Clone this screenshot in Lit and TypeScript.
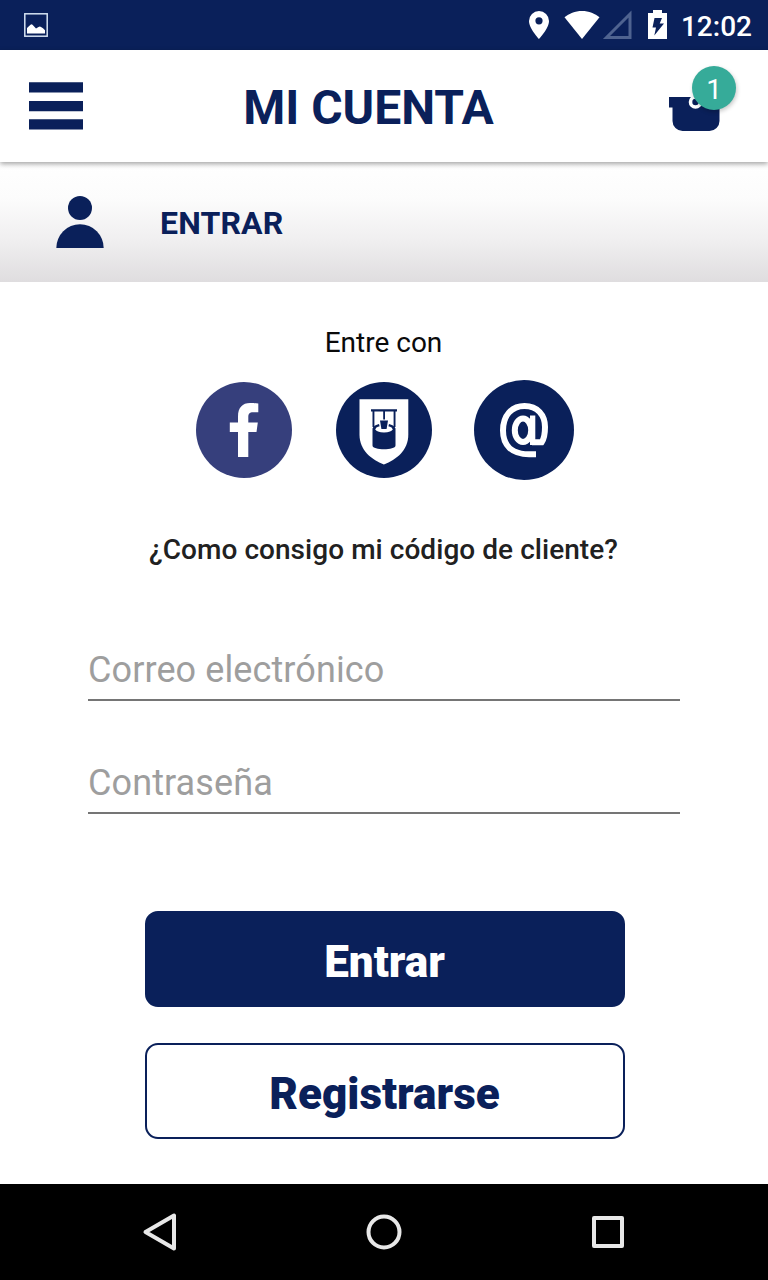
import { LitElement, html, css } from "lit";
import { customElement, property } from "lit/decorators.js";

@customElement("status-bar")
class StatusBar extends LitElement {
  static styles = css`
    :host {
      display: flex;
      align-items: center;
      height: 50px;
      padding: 0 16px 0 24px;
      box-sizing: border-box;
      background: #0a205a;
      color: #fff;
      font: 500 28px/50px Roboto, sans-serif;
    }
    svg { display: block; }
    .tray { margin-left: auto; }
    .clock { margin: 3px 0 0 13px; }
  `;
  render() {
    return html`
      <svg width="24" height="24" viewBox="0 0 24 24">
        <rect x=".8" y=".8" width="22.4" height="22.4" fill="none" stroke="#d5e2f2" stroke-width="1.5" />
        <path fill="#fff" d="M3 20.500V15l3.500-3.200q1-1 2 0L12 15.500l2.500-1.500q1.500-.8 2.500 0l2 1.200 2 2v3.300z" />
      </svg>
      <svg class="tray" width="140" height="30" viewBox="528 10 140 30">
        <path fill="#fff" fill-rule="evenodd" d="M539 11a10 10 0 0 0-10 10c0 7.500 10 18 10 18s10-10.500 10-18a10 10 0 0 0-10-10zm0 6.200a3.600 3.600 0 1 1 0 7.200 3.600 3.600 0 0 1 0-7.200z" />
        <path fill="#fff" d="M582 39 564.500 17.300C569 13.500 575 11 582 11s13 2.500 17.500 6.300z" />
        <path fill="none" stroke="#4f6390" stroke-width="3" d="M606.500 37.500h23.500V14z" />
        <path fill="#fff" d="M648 13h5v-3h9v3h5v26h-19z" />
        <path fill="#0a205a" d="M654.500 18h7.500l-2.300 5.500h4.300L654.300 35.500l1.700-8h-3.500z" />
      </svg>
      <span class="clock">12:02</span>
    `;
  }
}

@customElement("app-header")
class AppHeader extends LitElement {
  @property({ type: Number }) count = 0;
  static styles = css`
    :host {
      display: flex;
      align-items: center;
      height: 112px;
      padding: 0 32px 0 29px;
      box-sizing: border-box;
      background: #fff;
      position: relative;
      z-index: 1;
      box-shadow: 0 2px 5px rgba(0, 0, 0, 0.36);
      font-family: Roboto, sans-serif;
      color: #0a205a;
    }
    svg { display: block; }
    h1 {
      flex: 1;
      margin: 3px 0 0;
      padding-right: 15px;
      text-align: center;
      font-size: 48px;
      line-height: 56px;
      font-weight: 700;
    }
    .basket { position: relative; width: 67px; height: 80px; }
    .badge {
      position: absolute;
      right: 0;
      top: 0;
      width: 44px;
      height: 44px;
      border-radius: 50%;
      background: #36ab99;
      color: #fff;
      text-align: center;
      font-size: 28px;
      line-height: 48px;
      box-shadow: 1px 2px 4px rgba(0, 0, 0, 0.22);
    }
  `;
  render() {
    return html`
      <svg width="54" height="48" viewBox="0 0 54 48" fill="#0a205a">
        <path d="M0 .3h54v10.200H0zM0 19h54v10.200H0zM0 37.200h54v10.300H0z" />
      </svg>
      <h1>MI CUENTA</h1>
      <div class="basket">
        <svg width="67" height="80" viewBox="669 66 67 80">
          <path fill="#0a205a" d="M669 97h54v10.500h-3.500V121a10 10 0 0 1-10 10h-27a10 10 0 0 1-10-10v-13.500H669z" />
          <circle cx="695.500" cy="102" r="5" fill="none" stroke="#fff" stroke-width="3.600" />
        </svg>
        <span class="badge">${this.count}</span>
      </div>
    `;
  }
}

@customElement("section-banner")
class SectionBanner extends LitElement {
  static styles = css`
    :host {
      display: flex;
      align-items: center;
      gap: 56px;
      height: 120px;
      padding: 0 56px;
      box-sizing: border-box;
      background: linear-gradient(#fff, #fcfcfc 30%, #f0eff0 65%, #dfdddf);
      font: 700 32px/40px Roboto, sans-serif;
      letter-spacing: 0.15px;
      color: #0a205a;
    }
    svg { display: block; }
    span { padding-top: 2px; }
  `;
  render() {
    return html`
      <svg width="48" height="52" viewBox="0 0 48 52" fill="#0a205a">
        <circle cx="24" cy="12" r="12" />
        <path d="M.3 52a23.700 23.700 0 0 1 47.400 0z" />
      </svg>
      <span>ENTRAR</span>
    `;
  }
}

@customElement("login-form")
class LoginForm extends LitElement {
  static styles = css`
    :host {
      display: flex;
      flex-direction: column;
      align-items: center;
      height: 902px;
      padding-top: 44px;
      box-sizing: border-box;
      background: #fff;
      font-family: Roboto, sans-serif;
    }
    svg { display: block; }
    p { margin: 0; padding-right: 1px; font-size: 28px; line-height: 34px; color: #0a0a0a; }
    .social { display: flex; align-items: center; height: 100px; margin-top: 20px; padding-left: 2px; }
    .fb { margin-right: 44px; }
    .shield { margin-right: 42px; }
    .help { margin-top: 53px; font-weight: 500; color: #212121; letter-spacing: 0.05px; }
    input {
      display: block;
      width: 592px;
      height: 60px;
      padding: 0;
      box-sizing: border-box;
      border: 0;
      border-bottom: 2px solid #757575;
      border-radius: 0;
      outline: 0;
      background: none;
      font: 400 36px/44px Roboto, sans-serif;
      letter-spacing: 0.1px;
      color: #212121;
    }
    input::placeholder { color: #9e9e9e; opacity: 1; }
    .email { margin-top: 74px; }
    .password { margin-top: 53px; }
    button {
      width: 480px;
      height: 96px;
      margin-left: 2px;
      padding: 6px 1px 0 0;
      border: 2px solid #0a205a;
      border-radius: 13px;
      box-sizing: border-box;
      font: 900 44px/50px Roboto, sans-serif;
    }
    .primary { margin-top: 97px; background: #0a205a; color: #fff; }
    .secondary { margin-top: 36px; background: #fff; color: #0a205a; }
  `;
  render() {
    return html`
      <p>Entre con</p>
      <div class="social">
        <svg class="fb" width="96" height="96" viewBox="196 382 96 96">
          <circle cx="244" cy="430" r="48" fill="#363f7c" />
          <path fill="#fff" d="M238 457V432h-8.200v-9.500h8.200V416.500c0-9 4.500-13.500 12-13.500 4 0 6 .2 8.300.6v8.600h-5c-4 0-5 1.500-5 5v5.300h9.500l-1.300 9.500H248.300v25z" />
        </svg>
        <svg class="shield" width="96" height="96" viewBox="336 382 96 96">
          <circle cx="384" cy="430" r="48" fill="#0a205a" />
          <path fill="#fff" d="M359.500 399.200h48.800v35.300c0 16-12 25-24.400 30-12.400-5-24.400-14-24.400-30z" />
          <g fill="#0a205a">
            <path d="M371 409.300h26v2.200h-26zM372.500 411h1.900v16h-1.900zM393.600 411h1.900v16h-1.900zM383.200 411h1.800v8.500h-1.800z" />
            <path d="M372.500 428.500c1-2.500 3.500-3.800 6.500-4.500l1 4h8l1-4c3 .7 5.500 2 6.500 4.500V445.500c0 5-23 5-23 0z" />
          </g>
          <ellipse cx="384" cy="429.200" rx="8.500" ry="3.400" fill="#fff" />
          <path fill="#fff" d="M379.200 420h9.600l-1.600 8.500h-6.400z" />
          <path fill="#0a205a" d="M380 420.500h8l-1.400 8.500h-5.200z" />
        </svg>
        <svg width="100" height="100" viewBox="474 380 100 100">
          <circle cx="524" cy="430" r="50" fill="#0a205a" />
          <path fill="none" stroke="#fff" stroke-width="6" d="M536 454.200H529C512 454.200 503 445.500 503 430.500 503 415.500 511.500 406 524.500 406 537.500 406 545 415 545 427c0 6.500-1 12-3.300 15.200H532" />
          <path fill="#fff" d="M530 415.500h5.300V445H530z" />
          <ellipse cx="523" cy="430.200" rx="8.200" ry="11.700" fill="none" stroke="#fff" stroke-width="6" />
        </svg>
      </div>
      <p class="help">¿Como consigo mi código de cliente?</p>
      <input class="email" type="email" placeholder="Correo electrónico" />
      <input class="password" type="password" placeholder="Contraseña" />
      <button class="primary">Entrar</button>
      <button class="secondary">Registrarse</button>
    `;
  }
}

@customElement("nav-bar")
class NavBar extends LitElement {
  static styles = css`
    :host {
      display: flex;
      align-items: center;
      justify-content: center;
      gap: 184px;
      height: 96px;
      background: #000;
    }
    svg { display: block; fill: none; stroke: #e8e8e8; stroke-width: 4; stroke-linejoin: round; }
  `;
  render() {
    return html`
      <svg width="40" height="40" viewBox="140 1212 40 40"><path d="M174 1215.500v33L145.500 1232z" /></svg>
      <svg width="40" height="40" viewBox="0 0 40 40"><circle cx="20" cy="20" r="15.500" /></svg>
      <svg width="40" height="40" viewBox="0 0 40 40"><rect x="6" y="6" width="28" height="28" /></svg>
    `;
  }
}

@customElement("app-root")
class AppRoot extends LitElement {
  static styles = css`
    :host { display: flex; flex-direction: column; width: 768px; height: 1280px; overflow: hidden; background: #fff; }
  `;
  render() {
    return html`
      <status-bar></status-bar>
      <app-header .count=${1}></app-header>
      <section-banner></section-banner>
      <login-form></login-form>
      <nav-bar></nav-bar>
    `;
  }
}
